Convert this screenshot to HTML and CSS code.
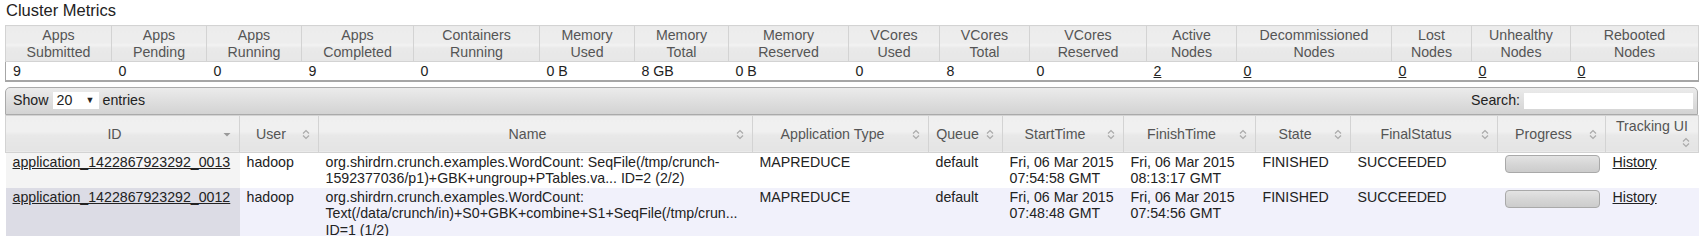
FILE: index.html
```html
<!DOCTYPE html>
<html>
<head>
<meta charset="utf-8">
<link rel="stylesheet" href="styles.css">
</head>
<body>
<h3 class="title">Cluster Metrics</h3>
<table class="metrics">
  <colgroup>
    <col class="w106"><col class="w95"><col class="w95"><col class="w112"><col class="w126"><col class="w95"><col class="w94"><col class="w120"><col class="w91"><col class="w90"><col class="w117"><col class="w90"><col class="w155"><col class="w80"><col class="w99"><col class="w128">
  </colgroup>
  <thead>
    <tr>
      <th>Apps<br>Submitted</th><th>Apps<br>Pending</th><th>Apps<br>Running</th><th>Apps<br>Completed</th><th>Containers<br>Running</th><th>Memory<br>Used</th><th>Memory<br>Total</th><th>Memory<br>Reserved</th><th>VCores<br>Used</th><th>VCores<br>Total</th><th>VCores<br>Reserved</th><th>Active<br>Nodes</th><th>Decommissioned<br>Nodes</th><th>Lost<br>Nodes</th><th>Unhealthy<br>Nodes</th><th>Rebooted<br>Nodes</th>
    </tr>
  </thead>
  <tbody>
    <tr>
      <td>9</td><td>0</td><td>0</td><td>9</td><td>0</td><td>0 B</td><td>8 GB</td><td>0 B</td><td>0</td><td>8</td><td>0</td><td><a href="#">2</a></td><td><a href="#">0</a></td><td><a href="#">0</a></td><td><a href="#">0</a></td><td><a href="#">0</a></td>
    </tr>
  </tbody>
</table>

<div class="apps">
  <div class="toolbar">
    <div class="length">Show <span class="select"><span class="sel-val">20</span><span class="sel-arrow">&#9660;</span></span> entries</div>
    <div class="filter">Search: <span class="search"></span></div>
  </div>
  <table class="grid">
    <colgroup>
      <col class="w234"><col class="w79"><col class="w434"><col class="w176"><col class="w74"><col class="w121"><col class="w132"><col class="w95"><col class="w147"><col class="w108"><col class="w93">
    </colgroup>
    <thead>
      <tr>
        <th><div class="sw">ID<span class="icon"><svg width="16" height="16" viewBox="0 0 16 16"><polygon points="4.5,7 11.5,7 8,10.5" fill="#999"/></svg></span></div></th>
        <th><div class="sw">User<span class="icon"><svg width="16" height="16" viewBox="0 0 16 16"><path d="M5 7.5 L8 4.5 L11 7.5 M5 9.5 L8 12.5 L11 9.5" fill="none" stroke="#aaa" stroke-width="1.2"/></svg></span></div></th>
        <th><div class="sw">Name<span class="icon"><svg width="16" height="16" viewBox="0 0 16 16"><path d="M5 7.5 L8 4.5 L11 7.5 M5 9.5 L8 12.5 L11 9.5" fill="none" stroke="#aaa" stroke-width="1.2"/></svg></span></div></th>
        <th><div class="sw">Application Type<span class="icon"><svg width="16" height="16" viewBox="0 0 16 16"><path d="M5 7.5 L8 4.5 L11 7.5 M5 9.5 L8 12.5 L11 9.5" fill="none" stroke="#aaa" stroke-width="1.2"/></svg></span></div></th>
        <th><div class="sw">Queue<span class="icon"><svg width="16" height="16" viewBox="0 0 16 16"><path d="M5 7.5 L8 4.5 L11 7.5 M5 9.5 L8 12.5 L11 9.5" fill="none" stroke="#aaa" stroke-width="1.2"/></svg></span></div></th>
        <th><div class="sw">StartTime<span class="icon"><svg width="16" height="16" viewBox="0 0 16 16"><path d="M5 7.5 L8 4.5 L11 7.5 M5 9.5 L8 12.5 L11 9.5" fill="none" stroke="#aaa" stroke-width="1.2"/></svg></span></div></th>
        <th><div class="sw">FinishTime<span class="icon"><svg width="16" height="16" viewBox="0 0 16 16"><path d="M5 7.5 L8 4.5 L11 7.5 M5 9.5 L8 12.5 L11 9.5" fill="none" stroke="#aaa" stroke-width="1.2"/></svg></span></div></th>
        <th><div class="sw">State<span class="icon"><svg width="16" height="16" viewBox="0 0 16 16"><path d="M5 7.5 L8 4.5 L11 7.5 M5 9.5 L8 12.5 L11 9.5" fill="none" stroke="#aaa" stroke-width="1.2"/></svg></span></div></th>
        <th><div class="sw">FinalStatus<span class="icon"><svg width="16" height="16" viewBox="0 0 16 16"><path d="M5 7.5 L8 4.5 L11 7.5 M5 9.5 L8 12.5 L11 9.5" fill="none" stroke="#aaa" stroke-width="1.2"/></svg></span></div></th>
        <th><div class="sw">Progress<span class="icon"><svg width="16" height="16" viewBox="0 0 16 16"><path d="M5 7.5 L8 4.5 L11 7.5 M5 9.5 L8 12.5 L11 9.5" fill="none" stroke="#aaa" stroke-width="1.2"/></svg></span></div></th>
        <th><div class="sw">Tracking UI<span class="icon"><svg width="16" height="16" viewBox="0 0 16 16"><path d="M5 7.5 L8 4.5 L11 7.5 M5 9.5 L8 12.5 L11 9.5" fill="none" stroke="#aaa" stroke-width="1.2"/></svg></span></div></th>
      </tr>
    </thead>
    <tbody>
      <tr class="even">
        <td class="sorted"><a href="#">application_1422867923292_0013</a></td>
        <td>hadoop</td>
        <td>org.shirdrn.crunch.examples.WordCount: SeqFile(/tmp/crunch-1592377036/p1)+GBK+ungroup+PTables.va... ID=2 (2/2)</td>
        <td>MAPREDUCE</td>
        <td>default</td>
        <td>Fri, 06 Mar 2015 07:54:58 GMT</td>
        <td>Fri, 06 Mar 2015 08:13:17 GMT</td>
        <td>FINISHED</td>
        <td>SUCCEEDED</td>
        <td><div class="progress"></div></td>
        <td><a href="#">History</a></td>
      </tr>
      <tr class="odd">
        <td class="sorted"><a href="#">application_1422867923292_0012</a></td>
        <td>hadoop</td>
        <td>org.shirdrn.crunch.examples.WordCount: Text(/data/crunch/in)+S0+GBK+combine+S1+SeqFile(/tmp/crun... ID=1 (1/2)</td>
        <td>MAPREDUCE</td>
        <td>default</td>
        <td>Fri, 06 Mar 2015 07:48:48 GMT</td>
        <td>Fri, 06 Mar 2015 07:54:56 GMT</td>
        <td>FINISHED</td>
        <td>SUCCEEDED</td>
        <td><div class="progress"></div></td>
        <td><a href="#">History</a></td>
      </tr>
    </tbody>
  </table>
</div>
</body>
</html>
```

FILE: styles.css
```css
html, body {
  margin: 0;
  padding: 0;
  background: #fff;
}
body {
  padding: 0 7px 0 5px;
  font-family: "Liberation Sans", Arial, sans-serif;
  font-size: 14.2px;
  line-height: 16.5px;
  color: #222;
}
a {
  color: #222;
  text-decoration: underline;
}
.title {
  margin: 0 0 5px 1px;
  font-size: 16.5px;
  line-height: 20px;
  font-weight: normal;
  color: #222;
}

/* column widths */
.w74 { width: 74px; } .w79 { width: 79px; } .w80 { width: 80px; }
.w90 { width: 90px; } .w91 { width: 91px; } .w93 { width: 93px; }
.w94 { width: 94px; } .w95 { width: 95px; } .w99 { width: 99px; }
.w106 { width: 106px; } .w108 { width: 108px; } .w112 { width: 112px; }
.w117 { width: 117px; } .w120 { width: 120px; } .w121 { width: 121px; }
.w126 { width: 126px; } .w128 { width: 128px; } .w132 { width: 132px; }
.w147 { width: 147px; } .w155 { width: 155px; } .w176 { width: 176px; }
.w234 { width: 234px; } .w434 { width: 434px; }

/* cluster metrics */
.metrics {
  width: 1693px;
  table-layout: fixed;
  border-collapse: collapse;
}
.metrics th {
  padding: 1px 3px;
  font-weight: normal;
  color: #555;
  text-align: center;
  vertical-align: middle;
  border: 1px solid #d3d3d3;
  background: linear-gradient(to bottom, #ececec 0%, #ededed 48%, #f3f3f3 52%, #e9e9e9 62%, #e7e7e7 100%);
}
.metrics td {
  padding: 1px 8px 0 7px;
  text-align: left;
  border-top: 1px solid #bdbdbd;
  border-bottom: 2px solid #a6a6a6;
  background: #fff;
}
.metrics td:first-child { border-left: 1px solid #a6a6a6; }
.metrics td:last-child { border-right: 1px solid #a6a6a6; }

/* applications */
.apps {
  margin-top: 5px;
  width: 1693px;
}
.toolbar {
  display: flex;
  justify-content: space-between;
  align-items: center;
  height: 26px;
  padding: 0 4px 0 7px;
  border: 1px solid #aaa;
  border-radius: 5px 5px 0 0;
  background: linear-gradient(to bottom, #ebebeb 0%, #e0e0e0 45%, #d3d3d3 100%);
  color: #222;
}
.length, .filter {
  display: flex;
  align-items: center;
  gap: 4px;
}
.select {
  display: inline-flex;
  align-items: center;
  justify-content: space-between;
  width: 46px;
  height: 17px;
  padding: 0 4px;
  box-sizing: border-box;
  background: #fff;
}
.sel-arrow {
  font-size: 9px;
  color: #222;
}
.search {
  display: inline-block;
  width: 169px;
  height: 16px;
  background: #fff;
}

.grid {
  width: 1693px;
  table-layout: fixed;
  border-collapse: collapse;
}
.grid th {
  padding: 2px 4px;
  font-weight: normal;
  color: #555;
  text-align: center;
  vertical-align: middle;
  line-height: 16px;
  border: 1px solid #d3d3d3;
  background: linear-gradient(to bottom, #efefef 0%, #f0f0f0 45%, #e8e8e8 55%, #e4e4e4 100%);
}
.sw {
  text-align: center;
}
.icon {
  float: right;
  width: 16px;
  height: 16px;
}
.icon svg { display: block; }

.grid td {
  padding: 1px 6px 1px 7px;
  vertical-align: top;
  text-align: left;
  color: #222;
  overflow-wrap: normal;
}
.grid tr.even td { background: #fff; }
.grid tr.even td.sorted { background: #f4f4f4; }
.grid tr.odd td { background: #f1f1fb; }
.grid tr.odd td.sorted { background: #dcdce5; }

.progress {
  width: 95px;
  height: 18px;
  margin-top: 1px;
  box-sizing: border-box;
  border: 1px solid #a9a9a9;
  border-radius: 4px;
  background: linear-gradient(to bottom, #e3e3e3 0%, #d4d4d4 60%, #cccccc 100%);
}
```
